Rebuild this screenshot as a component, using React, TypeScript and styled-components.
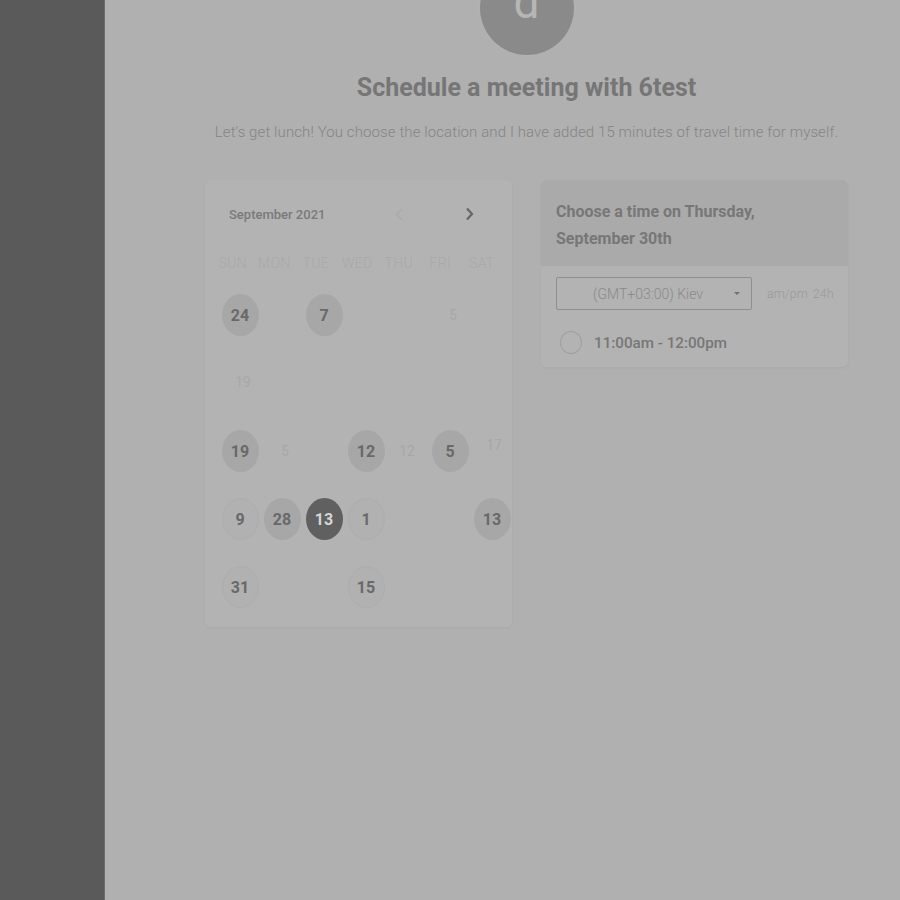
import React from "react";
import styled, { createGlobalStyle } from "styled-components";

const GlobalStyle = createGlobalStyle`
  html, body { margin: 0; padding: 0; }
  body {
    background: #b0b0b0;
    font-family: Roboto, "Liberation Sans", Arial, sans-serif;
    overflow: hidden;
  }
`;

const Page = styled.div`
  display: flex;
  min-height: 100vh;
  height: 900px;
`;

const Sidebar = styled.aside`
  width: 104px;
  flex: none;
  background: #5a5a5a;
  border-right: 1px solid #6c6c6c;
`;

const Main = styled.main`
  flex: 1;
  display: flex;
  flex-direction: column;
  align-items: center;
  padding-left: 48px;
  background: #b0b0b0;
`;

const Avatar = styled.div`
  width: 94px;
  height: 94px;
  margin-top: -39px;
  border-radius: 50%;
  background: #8a8a8a;
  display: flex;
  align-items: center;
  justify-content: center;
  color: #b6b6b6;
  font-size: 46px;
  font-weight: 400;
  line-height: 1;
  box-shadow: 0 0 0 1px rgba(255, 255, 255, 0.04);
`;

const AvatarLetter = styled.span`
  transform: translateY(-6px);
`;

const Title = styled.h1`
  margin: 17px 0 0;
  font-size: 25px;
  line-height: 32px;
  font-weight: 700;
  color: #767676;
`;

const Subtitle = styled.p`
  margin: 18px 0 0;
  font-size: 15px;
  letter-spacing: 0.1px;
  line-height: 20px;
  font-weight: 300;
  color: #858585;
`;

const Columns = styled.div`
  display: flex;
  gap: 29px;
  margin-top: 38px;
  align-items: flex-start;
`;

const CalendarCard = styled.section`
  width: 307px;
  height: 447px;
  box-sizing: border-box;
  background: #b3b3b3;
  border-radius: 6px;
  box-shadow: 0 1px 3px rgba(0, 0, 0, 0.04);
  padding: 20px 0 0 0;
`;

const CalHeader = styled.div`
  display: flex;
  align-items: center;
  height: 28px;
  padding-left: 24px;
  padding-right: 36px;
`;

const MonthLabel = styled.span`
  flex: 1;
  font-size: 13px;
  font-weight: 500;
  color: #7a7a7a;
`;

const NavButton = styled.button<{ $faint?: boolean }>`
  border: 0;
  background: transparent;
  padding: 0;
  width: 14px;
  height: 16px;
  display: flex;
  align-items: center;
  justify-content: center;
  color: ${(p) => (p.$faint ? "#a9a9a9" : "#666666")};
  margin-left: ${(p) => (p.$faint ? "0" : "56px")};
  cursor: pointer;
`;

const WeekRow = styled.div`
  display: grid;
  grid-template-columns: repeat(7, 41.5px);
  margin: 24px 0 0 7px;
  height: 22px;
  align-items: center;
`;

const WeekDay = styled.span`
  text-align: center;
  font-size: 14px;
  font-weight: 300;
  letter-spacing: 0.3px;
  color: #a9a9a9;
`;

const DayGrid = styled.div`
  display: grid;
  grid-template-columns: repeat(7, 42px);
  grid-auto-rows: 68px;
  margin: 7px 0 0 14px;
`;

const Cell = styled.div`
  display: flex;
  align-items: center;
  justify-content: center;
`;

type DayKind = "normal" | "light" | "selected";

const DayCircle = styled.span<{ $kind: DayKind }>`
  width: 37px;
  height: 42px;
  border-radius: 50%;
  display: flex;
  align-items: center;
  justify-content: center;
  font-size: 16px;
  font-weight: 700;
  background: ${(p) =>
    p.$kind === "selected" ? "#606060" : p.$kind === "light" ? "#b1b1b1" : "#a7a7a7"};
  color: ${(p) => (p.$kind === "selected" ? "#d6d6d6" : "#696969")};
  box-shadow: ${(p) => (p.$kind === "light" ? "inset 0 0 3px rgba(0,0,0,0.04)" : "none")};
`;

const FaintDay = styled.span<{ $dx?: number; $dy?: number }>`
  font-size: 14px;
  font-weight: 400;
  color: #a7a7a7;
  transform: translate(${(p) => p.$dx ?? 0}px, ${(p) => p.$dy ?? 0}px);
`;

const TimeCard = styled.section`
  width: 307px;
  border-radius: 6px;
  background: #b2b2b2;
  box-shadow: 0 1px 3px rgba(0, 0, 0, 0.04);
  overflow: hidden;
`;

const TimeHeader = styled.div`
  background: #aaaaaa;
  padding: 18px 15px 14px;
  margin-bottom: 3px;
`;

const TimeTitle = styled.h2`
  margin: 0;
  font-size: 16px;
  line-height: 27px;
  font-weight: 700;
  color: #777777;
  max-width: 230px;
`;

const TimeBody = styled.div`
  padding: 8px 15px 13px;
  background: #b3b3b3;
`;

const ZoneRow = styled.div`
  display: flex;
  align-items: center;
  gap: 15px;
`;

const ZoneSelect = styled.div`
  flex: none;
  width: 196px;
  height: 33px;
  box-sizing: border-box;
  border: 1px solid #8f8f8f;
  border-radius: 2px;
  display: flex;
  align-items: center;
  padding-left: 36px;
  padding-right: 11px;
`;

const ZoneText = styled.span`
  flex: 1;
  font-size: 14px;
  font-weight: 300;
  color: #8a8a8a;
`;

const Caret = styled.span`
  width: 0;
  height: 0;
  border-left: 3px solid transparent;
  border-right: 3px solid transparent;
  border-top: 3px solid #707070;
`;

const FormatToggle = styled.div`
  display: flex;
  gap: 5px;
  font-size: 12.5px;
  font-weight: 300;
  color: #999999;
`;

const SlotRow = styled.label`
  display: flex;
  align-items: center;
  gap: 12px;
  margin-top: 21px;
  padding-left: 4px;
`;

const Radio = styled.span`
  width: 22px;
  height: 23px;
  border-radius: 50%;
  border: 1px solid #a0a0a0;
  box-sizing: border-box;
`;

const SlotText = styled.span`
  font-size: 15.2px;
  font-weight: 500;
  color: #777777;
`;

type Day =
  | { t: "circle"; v: string; kind: DayKind }
  | { t: "faint"; v: string; dx?: number; dy?: number }
  | null;

const C = (v: string, kind: DayKind = "normal"): Day => ({ t: "circle", v, kind });
const F = (v: string, dx?: number, dy?: number): Day => ({ t: "faint", v, dx, dy });

const rows: Day[][] = [
  [C("24"), null, C("7"), null, null, F("5", 3), null],
  [F("19", 3, -1), null, null, null, null, null, null],
  [C("19"), F("5", 3), null, C("12"), F("12", -1), C("5"), F("17", 2, -6)],
  [C("9", "light"), C("28"), C("13", "selected"), C("1", "light"), null, null, C("13")],
  [C("31", "light"), null, null, C("15", "light"), null, null, null],
];

const weekdays = ["SUN", "MON", "TUE", "WED", "THU", "FRI", "SAT"];

export default function App() {
  return (
    <>
      <GlobalStyle />
      <Page>
        <Sidebar />
        <Main>
          <Avatar>
            <AvatarLetter>d</AvatarLetter>
          </Avatar>
          <Title>Schedule a meeting with 6test</Title>
          <Subtitle>
            Let's get lunch! You choose the location and I have added 15 minutes of travel time for myself.
          </Subtitle>
          <Columns>
            <CalendarCard>
              <CalHeader>
                <MonthLabel>September 2021</MonthLabel>
                <NavButton $faint aria-label="Previous month">
                  <svg width="8" height="13" viewBox="0 0 8 13" fill="none">
                    <path d="M6.5 1.5L1.5 6.5L6.5 11.5" stroke="currentColor" strokeWidth="1.4" />
                  </svg>
                </NavButton>
                <NavButton aria-label="Next month">
                  <svg width="9" height="14" viewBox="0 0 9 14" fill="none">
                    <path d="M2 1.5L7 7L2 12.5" stroke="currentColor" strokeWidth="2.2" />
                  </svg>
                </NavButton>
              </CalHeader>
              <WeekRow>
                {weekdays.map((w) => (
                  <WeekDay key={w}>{w}</WeekDay>
                ))}
              </WeekRow>
              <DayGrid>
                {rows.flatMap((row, ri) =>
                  row.map((d, ci) => (
                    <Cell key={`${ri}-${ci}`}>
                      {d && d.t === "circle" && <DayCircle $kind={d.kind}>{d.v}</DayCircle>}
                      {d && d.t === "faint" && (
                        <FaintDay $dx={d.dx} $dy={d.dy}>
                          {d.v}
                        </FaintDay>
                      )}
                    </Cell>
                  ))
                )}
              </DayGrid>
            </CalendarCard>
            <TimeCard>
              <TimeHeader>
                <TimeTitle>Choose a time on Thursday, September 30th</TimeTitle>
              </TimeHeader>
              <TimeBody>
                <ZoneRow>
                  <ZoneSelect>
                    <ZoneText>(GMT+03:00) Kiev</ZoneText>
                    <Caret />
                  </ZoneSelect>
                  <FormatToggle>
                    <span>am/pm</span>
                    <span>24h</span>
                  </FormatToggle>
                </ZoneRow>
                <SlotRow>
                  <Radio />
                  <SlotText>11:00am - 12:00pm</SlotText>
                </SlotRow>
              </TimeBody>
            </TimeCard>
          </Columns>
        </Main>
      </Page>
    </>
  );
}
